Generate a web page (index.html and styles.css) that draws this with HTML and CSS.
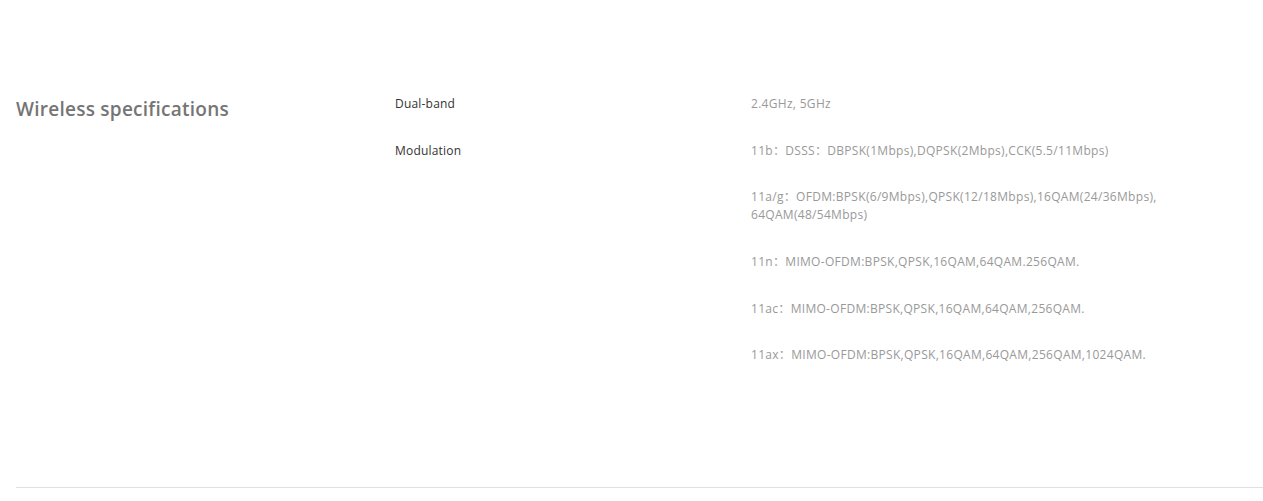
FILE: index.html
```html
<!DOCTYPE html>
<html lang="en">
<head>
    <meta charset="UTF-8">
    <meta name="viewport" content="width=device-width, initial-scale=1.0">
    <title>Specifications</title>
    <link rel="stylesheet" href="styles.css">
</head>
<body>
    <div class="spec-section">
        <h2 class="spec-title">Wireless specifications</h2>
        <div class="spec-rows">
            <div class="spec-row">
                <div class="spec-label">Dual-band</div>
                <div class="spec-values">
                    <p>2.4GHz, 5GHz</p>
                </div>
            </div>
            <div class="spec-row">
                <div class="spec-label">Modulation</div>
                <div class="spec-values">
                    <p>11b：DSSS：DBPSK(1Mbps),DQPSK(2Mbps),CCK(5.5/11Mbps)</p>
                    <p>11a/g：OFDM:BPSK(6/9Mbps),QPSK(12/18Mbps),16QAM(24/36Mbps), 64QAM(48/54Mbps)</p>
                    <p>11n：MIMO-OFDM:BPSK,QPSK,16QAM,64QAM.256QAM.</p>
                    <p>11ac：MIMO-OFDM:BPSK,QPSK,16QAM,64QAM,256QAM.</p>
                    <p>11ax：MIMO-OFDM:BPSK,QPSK,16QAM,64QAM,256QAM,1024QAM.</p>
                </div>
            </div>
        </div>
    </div>
</body>
</html>
```

FILE: styles.css
```css
body {
    font-family: "Open Sans", "Noto Sans CJK SC", sans-serif;
    background-color: #fff;
    margin: 0;
    padding: 0;
}
.spec-section {
    display: flex;
    margin-left: 16px;
    padding: 95px 0 94px;
    border-bottom: 1px solid #e0e0e0;
}
.spec-title {
    width: 379px;
    margin: 1px 0 0;
    font-size: 19px;
    font-weight: 600;
    letter-spacing: 0.25px;
    line-height: 26px;
    color: #757575;
}
.spec-rows {
    display: flex;
    flex-direction: column;
}
.spec-row {
    display: flex;
}
.spec-label {
    width: 356px;
    font-size: 12px;
    letter-spacing: 0.2px;
    line-height: 18px;
    color: #333;
}
.spec-values {
    width: 430px;
}
.spec-values p {
    margin: 0 0 28.7px;
    font-size: 12px;
    letter-spacing: 0.3px;
    line-height: 18px;
    color: #999;
}
```
